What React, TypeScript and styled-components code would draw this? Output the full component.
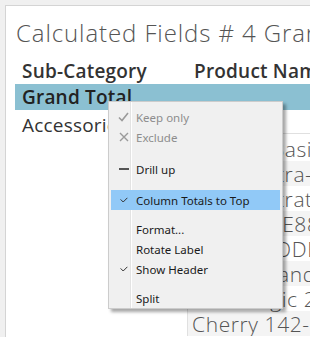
import React from "react";
import styled, { createGlobalStyle } from "styled-components";

const GlobalStyle = createGlobalStyle`
  html, body { margin: 0; padding: 0; background: #f0f0f0; }
  body { font-family: "Open Sans", "Noto Sans", sans-serif; }
`;

const Page = styled.div`
  position: relative;
  width: 310px;
  height: 337px;
  box-sizing: border-box;
  padding: 5px 0 0 5px;
  overflow: hidden;
  background: #f0f0f0;
`;

const Sheet = styled.div`
  height: 100%;
  background: #ffffff;
  border-top: 1px solid #d4d4d4;
  border-left: 1px solid #d4d4d4;
  box-sizing: border-box;
  overflow: hidden;
`;

const Title = styled.div`
  font-family: "Open Sans", sans-serif;
  font-weight: 300;
  font-size: 24px;
  letter-spacing: 0.9px;
  line-height: 28px;
  color: #555555;
  white-space: nowrap;
  padding: 13px 0 0 10px;
`;

const Table = styled.div`
  margin: 12px 0 0 9px;
`;

const HeaderRow = styled.div`
  display: grid;
  grid-template-columns: 179px 1fr;
  height: 25px;
  align-items: center;
  white-space: nowrap;
  overflow: hidden;
`;

const HeaderCell = styled.div`
  font-family: "Open Sans", sans-serif;
  font-weight: 600;
  font-size: 19px;
  letter-spacing: 0.2px;
  line-height: 25px;
  color: #333333;
  padding-left: 7px;
  &:last-child { padding-left: 0; }
`;

const TotalRow = styled.div`
  height: 26px;
  background: #8bc0d2;
  display: flex;
  align-items: center;
  padding-left: 7px;
  font-family: "Open Sans", sans-serif;
  font-weight: 600;
  font-size: 19px;
  letter-spacing: 0.2px;
  line-height: 25px;
  color: #222222;
`;

const Body = styled.div`
  display: flex;
`;

const CategoryCell = styled.div`
  width: 172px;
  flex: none;
  padding: 2px 0 0 7px;
  box-sizing: border-box;
  font-family: "Open Sans", sans-serif;
  font-size: 19px;
  letter-spacing: 0.2px;
  line-height: 26px;
  color: #333333;
  white-space: nowrap;
  overflow: hidden;
`;

const ProductPane = styled.div`
  flex: 1;
  margin-top: 23px;
  padding-top: 2px;
  border-top: 1px solid #e0e0e0;
  border-left: 1px solid #e0e0e0;
  white-space: nowrap;
  overflow: hidden;
`;

const ProductRow = styled.div<{ $band: boolean }>`
  height: 25px;
  display: flex;
  align-items: center;
  padding-left: 4px;
  background: ${(p) => (p.$band ? "#f4f4f4" : "#ffffff")};
  font-family: "Open Sans", sans-serif;
  font-weight: 300;
  font-size: 21px;
  letter-spacing: 0.6px;
  color: #555555;
`;

const Menu = styled.div`
  position: absolute;
  left: 108px;
  top: 101px;
  width: 175px;
  box-sizing: border-box;
  padding: 5px 2px 0 2px;
  border: 1px solid #cccccc;
  background:
    linear-gradient(to right, transparent 21px, #e3e3e3 21px, #e3e3e3 22px, #ffffff 22px, #ffffff 23px, transparent 23px),
    #f0f0f0;
  box-shadow: 3px 3px 3px rgba(0, 0, 0, 0.35);
  font-family: "Noto Sans", sans-serif;
  font-size: 11.5px;
`;

const Item = styled.div<{ $disabled?: boolean; $active?: boolean }>`
  display: grid;
  grid-template-columns: 25px 1fr;
  align-items: center;
  height: 20px;
  color: ${(p) => (p.$disabled ? "#8d8d8d" : "#1a1a1a")};
  background: ${(p) => (p.$active ? "#91c9f7" : "transparent")};
  white-space: nowrap;
`;

const IconSlot = styled.span`
  display: flex;
  align-items: center;
  justify-content: center;
  height: 100%;
`;

const Separator = styled.div<{ $h: number }>`
  height: ${(p) => p.$h}px;
`;

const BigCheck = () => (
  <svg width="11" height="10" viewBox="0 0 11 10">
    <path d="M1 5.5 L4 8.5 L10 1" fill="none" stroke="#9a9a9a" strokeWidth="1.6" />
  </svg>
);

const Cross = () => (
  <svg width="10" height="10" viewBox="0 0 10 10">
    <path d="M1 1 L9 9 M9 1 L1 9" fill="none" stroke="#9a9a9a" strokeWidth="1.4" />
  </svg>
);

const Dash = () => (
  <svg width="10" height="4" viewBox="0 0 10 4">
    <rect x="0" y="1" width="10" height="2" fill="#555555" />
  </svg>
);

const SmallCheck = () => (
  <svg width="8" height="6" viewBox="0 0 8 6">
    <path d="M0.6 2.4 L3.2 5 L7.4 0.8" fill="none" stroke="#333333" strokeWidth="1" />
  </svg>
);

const products = [
  "Anker's Basic Wireless Keyboard",
  "Anker Ultra-Slim Mini Bluetooth 3.0 Wireless Keyboard",
  "Anker Ultrathin Bluetooth Wireless Keyboard",
  "Belkin F8E887 USB Wired Ergonomic Keyboard",
  "Belkin QODE FastFit Bluetooth Keyboard",
  "Belkin Standard 104 key USB Keyboard",
  "Case Logic 2.4GHz Wireless Keyboard",
  "Cherry 142-key Programmable Keyboard",
];

export default function App() {
  return (
    <>
      <GlobalStyle />
      <Page>
        <Sheet>
          <Title>Calculated Fields # 4 Grand Totals</Title>
          <Table>
            <HeaderRow>
              <HeaderCell>Sub-Category</HeaderCell>
              <HeaderCell>Product Name</HeaderCell>
            </HeaderRow>
            <TotalRow>Grand Total</TotalRow>
            <Body>
              <CategoryCell>Accessories</CategoryCell>
              <ProductPane>
                {products.map((p, i) => (
                  <ProductRow key={p} $band={i % 2 === 1}>
                    {p}
                  </ProductRow>
                ))}
              </ProductPane>
            </Body>
          </Table>
        </Sheet>
        <Menu>
          <Item $disabled>
            <IconSlot><BigCheck /></IconSlot>
            <span>Keep only</span>
          </Item>
          <Item $disabled>
            <IconSlot><Cross /></IconSlot>
            <span>Exclude</span>
          </Item>
          <Separator $h={12} />
          <Item>
            <IconSlot><Dash /></IconSlot>
            <span>Drill up</span>
          </Item>
          <Separator $h={11} />
          <Item $active>
            <IconSlot><SmallCheck /></IconSlot>
            <span>Column Totals to Top</span>
          </Item>
          <Separator $h={9} />
          <Item>
            <IconSlot />
            <span>Format...</span>
          </Item>
          <Item>
            <IconSlot />
            <span>Rotate Label</span>
          </Item>
          <Item>
            <IconSlot><SmallCheck /></IconSlot>
            <span>Show Header</span>
          </Item>
          <Separator $h={9} />
          <Item>
            <IconSlot />
            <span>Split</span>
          </Item>
        </Menu>
      </Page>
    </>
  );
}
